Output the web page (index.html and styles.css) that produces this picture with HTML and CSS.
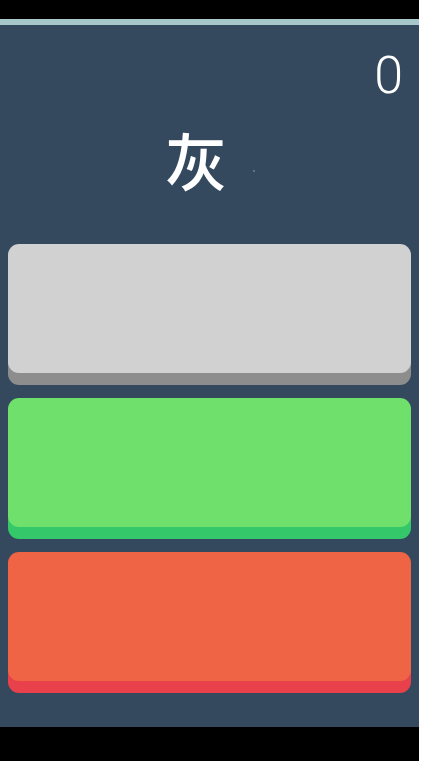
FILE: index.html
```html
<!DOCTYPE html>
<html lang="zh">
<head>
<meta charset="utf-8">
<title>Color game</title>
<link rel="stylesheet" href="styles.css">
</head>
<body>
<div class="screen">
  <div class="status-bar"></div>
  <div class="accent-line"></div>
  <main class="game">
    <div class="score">0</div>
    <div class="word">灰<span class="dot"></span></div>
    <div class="choices">
      <div class="choice choice-gray"></div>
      <div class="choice choice-green"></div>
      <div class="choice choice-red"></div>
    </div>
  </main>
  <div class="nav-bar"></div>
</div>
</body>
</html>
```
FILE: styles.css
```css
html, body {
  margin: 0;
  padding: 0;
  background: #ffffff;
}
.screen {
  width: 419px;
  height: 761px;
  display: flex;
  flex-direction: column;
  overflow: hidden;
}
.status-bar {
  height: 19px;
  background: #000000;
}
.accent-line {
  height: 6px;
  background: #a8c7ca;
}
.game {
  flex: 1;
  background: #34495e;
  display: flex;
  flex-direction: column;
}
.nav-bar {
  height: 34px;
  background: #000000;
}
.score {
  font-family: Roboto, "Liberation Sans", sans-serif;
  font-weight: 300;
  font-size: 52px;
  line-height: 52px;
  color: #ffffff;
  text-align: right;
  padding: 25px 16px 0 0;
}
.word {
  font-family: "Noto Sans CJK SC", "Noto Sans", sans-serif;
  font-weight: 500;
  font-size: 62px;
  line-height: 62px;
  color: #ffffff;
  text-align: center;
  margin-top: 26px;
  padding-right: 27px;
  position: relative;
}
.dot {
  position: absolute;
  left: 253px;
  top: 42px;
  width: 2px;
  height: 2px;
  border-radius: 1px;
  background: #6f8294;
}
.choices {
  display: flex;
  flex-direction: column;
  gap: 25px;
  margin: 54px 8px 0 8px;
}
.choice {
  height: 129px;
  border-radius: 11px;
}
.choice-gray {
  background: #d1d1d1;
  box-shadow: 0 12px 0 #8d8d8d;
}
.choice-green {
  background: #6ee06b;
  box-shadow: 0 12px 0 #34c86a;
}
.choice-red {
  background: #f06446;
  box-shadow: 0 12px 0 #e8414b;
}
```
